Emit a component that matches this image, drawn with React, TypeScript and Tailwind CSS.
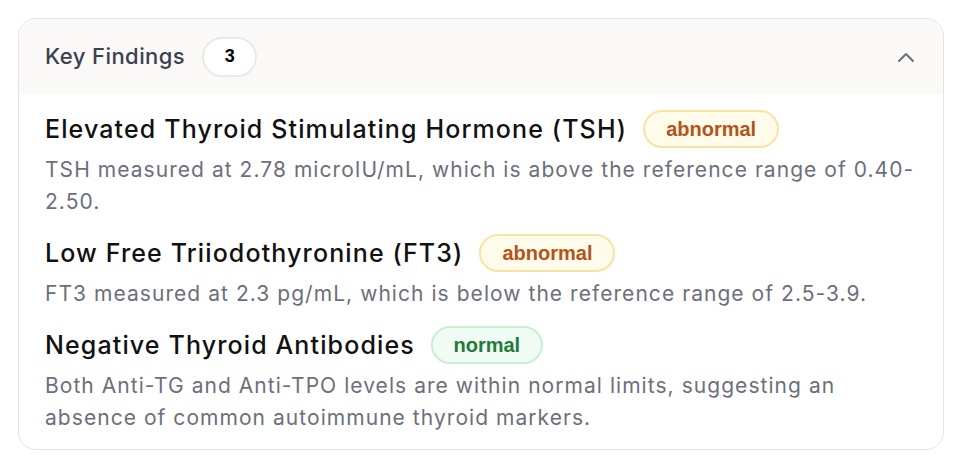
import React from "react";

type Finding = {
  title: string;
  status: "abnormal" | "normal";
  desc: string;
};

const findings: Finding[] = [
  {
    title: "Elevated Thyroid Stimulating Hormone (TSH)",
    status: "abnormal",
    desc: "TSH measured at 2.78 microIU/mL, which is above the reference range of 0.40-2.50.",
  },
  {
    title: "Low Free Triiodothyronine (FT3)",
    status: "abnormal",
    desc: "FT3 measured at 2.3 pg/mL, which is below the reference range of 2.5-3.9.",
  },
  {
    title: "Negative Thyroid Antibodies",
    status: "normal",
    desc: "Both Anti-TG and Anti-TPO levels are within normal limits, suggesting an absence of common autoimmune thyroid markers.",
  },
];

function Badge({ status }: { status: Finding["status"] }) {
  const cls =
    status === "abnormal"
      ? "w-[136px] border-[#f8e3a0] bg-[#fffbea] text-[#b4541a]"
      : "w-[112px] border-[#c7efd2] bg-[#f0fcf3] text-[#237a3c]";
  return (
    <span
      className={`inline-flex h-[38px] shrink-0 items-center justify-center rounded-full border-2 text-[20px] font-bold tracking-normal ${cls}`}
      style={{ fontFamily: '"Liberation Sans", Arial, sans-serif' }}
    >
      {status}
    </span>
  );
}

export default function App() {
  return (
    <div
      className="h-[476px] w-[962px] bg-white p-[18px]"
      style={{ fontFamily: 'Inter, "Noto Sans", sans-serif' }}
    >
      <div className="h-[432px] overflow-hidden rounded-[18px] border border-[#e3e3e3] bg-white">
        <div className="flex h-[75px] items-center justify-between bg-[#faf9f8] pl-[26px] pr-[28px]">
          <div className="flex items-center">
            <span className="text-[22px] font-medium tracking-[0.02em] text-[#3b4150]">Key Findings</span>
            <span
              className="ml-[17px] inline-flex h-[40px] w-[55px] items-center justify-center rounded-full border-2 border-[#ebe9e6] bg-white text-[18px] font-bold text-black"
              style={{ fontFamily: '"Liberation Sans", Arial, sans-serif' }}
            >
              3
            </span>
          </div>
          <svg width="18" height="12" viewBox="0 0 18 12" fill="none">
            <path d="M2 10 L9 3 L16 10" stroke="#6b6f78" strokeWidth="2" strokeLinecap="round" strokeLinejoin="round" />
          </svg>
        </div>
        <div className="flex flex-col gap-[16px] px-[26px] pt-[16px]">
          {findings.map((f) => (
            <div key={f.title}>
              <div className="flex h-[38px] items-center gap-[16px]">
                <span className="text-[25px] font-medium leading-[38px] tracking-[0.045em] text-[#111111]">
                  {f.title}
                </span>
                <Badge status={f.status} />
              </div>
              <p className="mt-[6px] text-[21px] leading-[32px] tracking-[0.05em] text-[#6c6f7b]">{f.desc}</p>
            </div>
          ))}
        </div>
      </div>
    </div>
  );
}
